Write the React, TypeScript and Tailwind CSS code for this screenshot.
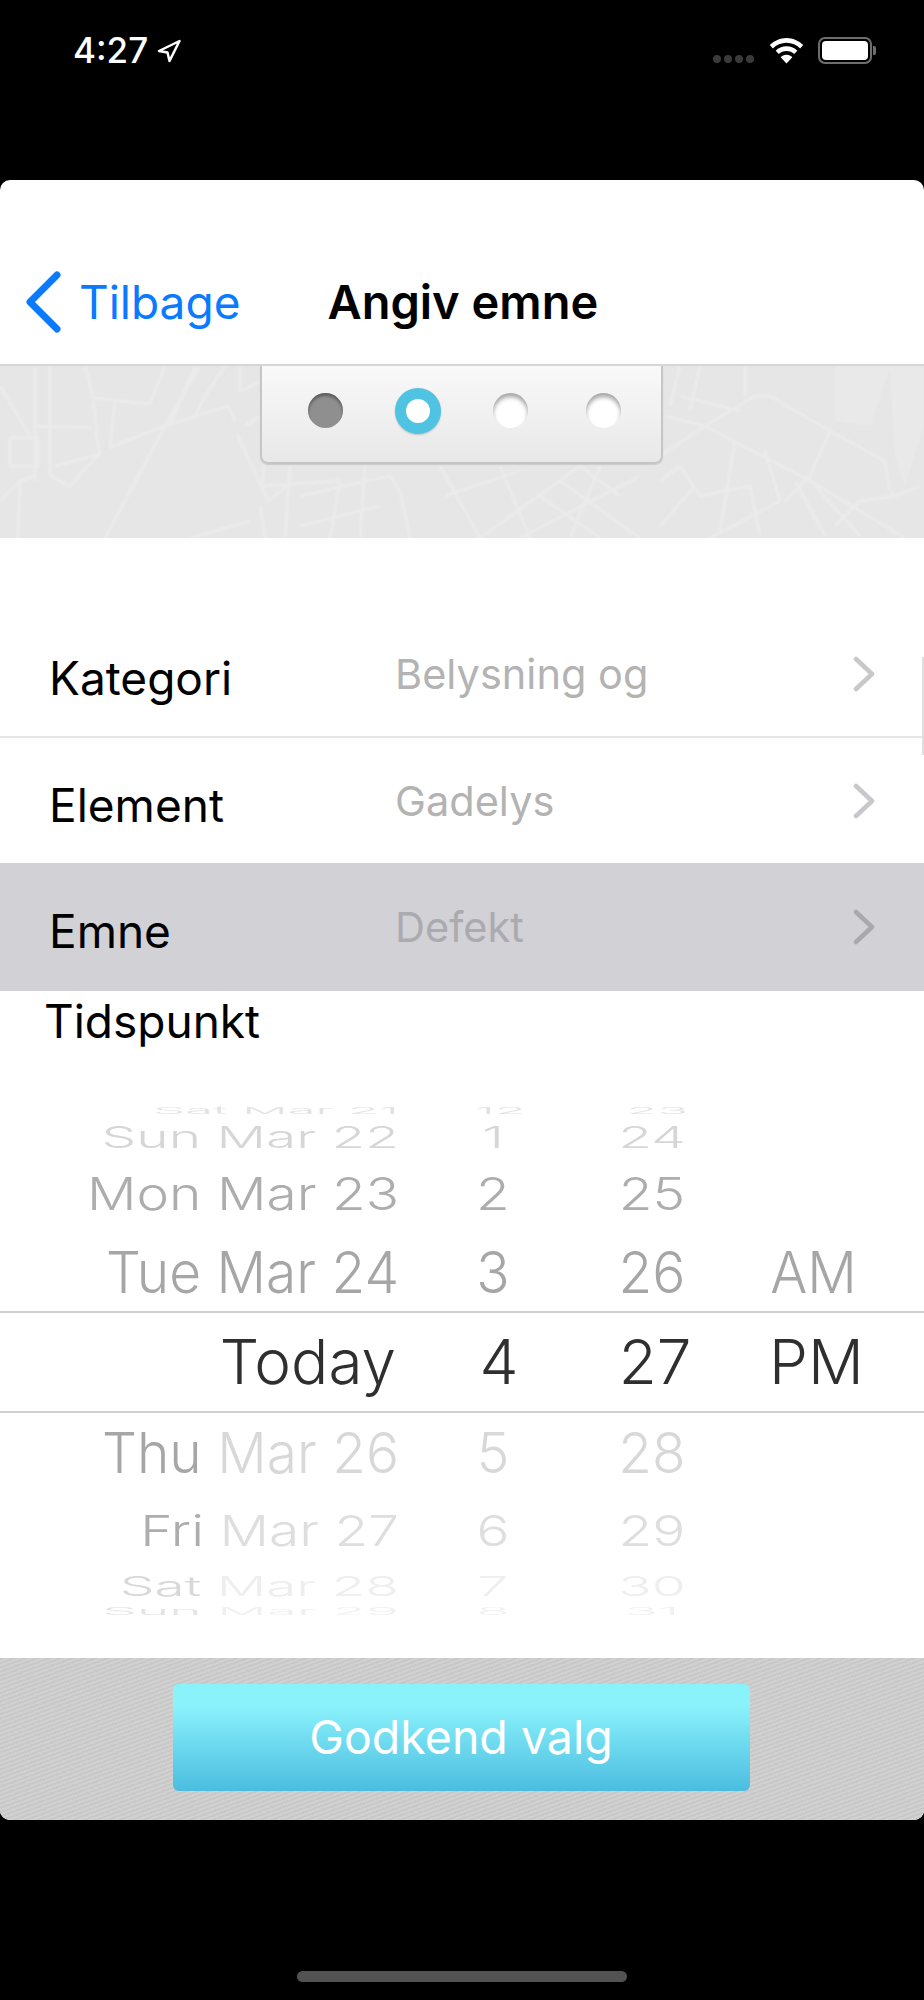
const F = "font-['Inter','Liberation_Sans',sans-serif]";

const Chevron = ({ c }: { c: string }) => (
  <svg width="24" height="36" viewBox="0 0 24 36" fill="none" className="ml-auto mr-[48px] shrink-0">
    <path d="M4 3 L20 18 L4 33" stroke={c} strokeWidth="4.5" strokeLinecap="round" strokeLinejoin="round" />
  </svg>
);

const Row = ({ label, value, sel }: { label: string; value: string; sel?: boolean }) => (
  <div className={`flex items-center ${sel ? "bg-[#d1d1d6] h-[128px]" : "h-[125px]"}`}>
    <div className="w-[395px] pl-[49px] text-[46px] leading-none text-black translate-y-[4px]">{label}</div>
    <div className={`text-[41.5px] leading-none translate-y-[1px] ${sel ? "text-[#ababaf]" : "text-[#b3b3b3]"}`}>{value}</div>
    <Chevron c={sel ? "#a9a9ad" : "#c7c7cc"} />
  </div>
);

type P = { h: string; t: string; d1: string; d2: string; a: string; m: string; ap?: string; c1: string; c2: string };
const rows: P[] = [
  { h: "h-[10px]", t: "scale-y-[0.17] scale-x-[0.92] origin-right", d1: "Sat", d2: "Mar 21", a: "12", m: "23", c1: "text-[#e2e2e2]", c2: "text-[#e2e2e2]" },
  { h: "h-[44px]", t: "scale-y-[0.55]", d1: "Sun", d2: "Mar 22", a: "1", m: "24", c1: "text-[#d6d6d6]", c2: "text-[#d6d6d6]" },
  { h: "h-[70px]", t: "scale-y-[0.82]", d1: "Mon", d2: "Mar 23", a: "2", m: "25", c1: "text-[#adadad]", c2: "text-[#adadad]" },
  { h: "h-[82px]", t: "scale-y-[1.05] translate-y-[2px]", d1: "Tue", d2: "Mar 24", a: "3", m: "26", ap: "AM", c1: "text-[#a6a6a6]", c2: "text-[#a6a6a6]" },
];
const rowsB: P[] = [
  { h: "h-[78px]", t: "scale-y-[1.03]", d1: "Thu", d2: "Mar 26", a: "5", m: "28", c1: "text-[#a6a6a6]", c2: "text-[#d8d8d8]" },
  { h: "h-[78px]", t: "scale-y-[0.78]", d1: "Fri", d2: "Mar 27", a: "6", m: "29", c1: "text-[#adadad]", c2: "text-[#dedede]" },
  { h: "h-[34px]", t: "scale-y-[0.5]", d1: "Sat", d2: "Mar 28", a: "7", m: "30", c1: "text-[#d8d8d8]", c2: "text-[#eeeeee]" },
  { h: "h-[17px]", t: "scale-y-[0.18]", d1: "Sun", d2: "Mar 29", a: "8", m: "31", c1: "text-[#e4e4e4]", c2: "text-[#f0f0f0]" },
];

const PickerRow = ({ r }: { r: P }) => (
  <div className={`grid grid-rows-1 grid-cols-[399px_188px_130px_1fr] items-center text-[55px] leading-none ${r.h}`}>
    <div className={`text-right whitespace-nowrap ${r.t}`}>
      <span className={r.c1}>{r.d1} </span>
      <span className={r.c2}>{r.d2}</span>
    </div>
    <div className={`text-center ${r.c2} ${r.t}`}>{r.a}</div>
    <div className={`text-center ${r.c2} ${r.t}`}>{r.m}</div>
    <div className={`pr-[14px] text-center text-[#a6a6a6] ${r.t}`}>{r.ap}</div>
  </div>
);

const Wifi = () => (
  <svg width="35" height="26" viewBox="0 0 36 28" fill="#fff">
    <path d="M18 0C11 0 5 3 0 7.500L3.300 11.200C7 7.600 12.300 5.200 18 5.200s11 2.400 14.700 6L36 7.500C31 3 25 0 18 0z" />
    <path d="M18 9c-4.800 0-8.800 1.800-11.600 4.800l3.300 3.500c2-2 5-3.300 8.300-3.300s6.300 1.300 8.300 3.300l3.300-3.500C26.800 10.800 22.800 9 18 9z" />
    <path d="M18 18c-2.700 0-4.800 1-6.300 2.600L18 27.500l6.300-6.900C22.800 19 20.700 18 18 18z" />
  </svg>
);

const MapLines = () => (
  <svg className="absolute inset-0 blur-[0.8px]" width="924" height="172" viewBox="0 0 924 172" fill="none" stroke="#ebebeb" strokeWidth="3" strokeLinejoin="round">
    <path d="M835 0 L890 0 L870 60 L835 55 Z M890 0 L924 0 L924 60 L905 120 L895 90 Z" fill="#e9e9e9" stroke="none" />
    <path d="M35 0 L35 115 M50 0 L50 110 M0 20 L30 70 M10 72 H38 V100 H10 Z M0 135 L20 115 L35 110 M20 115 L18 172" />
    <path d="M85 0 L93 32 L150 38 L165 0 M35 60 L92 62 M93 35 L97 65 M115 35 L110 80 M95 65 L100 88 L55 100 M100 88 L85 103 L70 120 L50 110" />
    <path d="M108 82 L165 60 L228 40 L235 55 M165 60 L105 172 M165 60 L200 0 M195 0 L170 60 M225 0 L205 30 L195 50" />
    <path d="M237 68 L268 135 L290 118 M260 140 L265 172 M190 172 L250 155 M245 60 L260 50 M240 0 L240 25 L262 15" />
    <path d="M290 100 L285 172 M300 130 L390 110 L400 125 L410 172 M265 95 L262 120 L340 115 L330 172 M300 160 L380 140 M440 100 L480 172 M365 98 L360 172" />
    <path d="M480 172 L580 100 L620 130 M520 172 L640 110 M540 130 L600 172 M560 115 L640 172 M445 130 L520 105 M600 100 L570 172 M500 100 L530 172" />
    <path d="M665 50 L705 60 L810 115 L905 172 M660 90 L705 60 L755 30 L770 30 L830 65 L885 95 L890 125 L895 130 M830 65 L810 110" />
    <path d="M735 75 L720 165 M765 85 L780 135 M785 135 L810 110 M780 135 L710 172 M680 100 L700 130 L750 120 L760 170 M660 115 L680 100" />
    <path d="M795 115 L825 170 M815 120 L860 170 M835 160 L860 135 L895 130 L920 120 M660 160 L695 120 M680 30 L740 45 M680 0 L670 40 M700 0 L690 45 M745 0 L745 30" />
  </svg>
);

export default function App() {
  return (
    <div className={`w-[924px] h-[2000px] bg-black flex flex-col overflow-hidden ${F}`}>
      {/* status bar */}
      <div className="h-[180px] shrink-0">
        <div className="flex items-center pt-[31px] pl-[73px] pr-[48px] h-[70px]">
          <span className="text-[35px] leading-none font-medium text-white">4:27</span>
          <svg width="24" height="24" viewBox="0 0 24 24" className="ml-[9px]" fill="none">
            <path d="M22.500 2 L2 12 L10.500 13.500 L12.500 22 Z" stroke="#fff" strokeWidth="2.500" strokeLinejoin="round" />
          </svg>
          <div className="ml-auto flex items-center gap-[3px] translate-y-[8px] mr-[15px]">
            {[0, 1, 2, 3].map((i) => (
              <span key={i} className="w-[8px] h-[8px] rounded-full bg-[#3a3a3a]" />
            ))}
          </div>
          <Wifi />
          <div className="ml-[14px] flex items-center">
            <div className="w-[54px] h-[27px] rounded-[7px] border-2 border-[#6e6e6e] p-[2px]">
              <div className="w-full h-full bg-white rounded-[4px]" />
            </div>
            <div className="ml-[1px] w-[3px] h-[9px] bg-[#6e6e6e] rounded-r-[2px]" />
          </div>
        </div>
      </div>

      {/* card */}
      <div className="h-[1640px] shrink-0 bg-white rounded-[10px] overflow-hidden flex flex-col">
        <div className="h-[186px] shrink-0 border-b-2 border-[#d6d6d6] flex items-end pb-[31px]">
          <svg width="36" height="62" viewBox="0 0 36 62" fill="none" className="ml-[25px] shrink-0">
            <path d="M32 4 L5 31 L32 58" stroke="#0a7aff" strokeWidth="7" strokeLinecap="round" strokeLinejoin="round" />
          </svg>
          <span className="ml-[18px] text-[46px] leading-[62px] text-[#0a7aff]">Tilbage</span>
          <span className="ml-[87px] text-[47px] leading-[62px] font-semibold text-black">Angiv emne</span>
        </div>

        {/* map */}
        <div className="h-[172px] shrink-0 bg-[#e6e6e6] relative overflow-hidden flex justify-center">
          <MapLines />
          <div className="relative -translate-x-[1px] w-[403px] h-[98px] rounded-b-[8px] border-x-2 border-b-2 border-[#c6c6c6] bg-gradient-to-b from-[#f9f9f9] to-[#e8e8e8] flex items-center pl-[46px] shadow-[0_1px_1px_rgba(0,0,0,0.12)]">
            <span className="w-[35px] h-[35px] rounded-full bg-[#8f8f8f] shadow-[inset_0_3px_3px_rgba(0,0,0,0.35)] mb-[7px]" />
            <span className="ml-[52px] w-[46px] h-[46px] rounded-full border-[11px] border-[#4fc3e2] bg-white mb-[7px] shadow-[0_1px_2px_rgba(0,0,0,0.2)]" />
            <span className="ml-[52px] w-[35px] h-[35px] rounded-full bg-white shadow-[inset_0_4px_4px_rgba(0,0,0,0.35)] mb-[7px]" />
            <span className="ml-[58px] w-[35px] h-[35px] rounded-full bg-white shadow-[inset_0_4px_4px_rgba(0,0,0,0.35)] mb-[7px]" />
          </div>
        </div>

        {/* form */}
        <div className="h-[73px] shrink-0" />
        <div className="relative">
          <div className="absolute right-0 top-[46px] w-[2px] h-[98px] bg-[#dedede]" />
          <Row label="Kategori" value="Belysning og" />
          <div className="h-[2px] bg-[#e6e6e6]" />
          <Row label="Element" value="Gadelys" />
          <Row label="Emne" value="Defekt" sel />
        </div>
        <div className="h-[64px] shrink-0 pl-[44px] text-[46px] leading-[60px] text-black">Tidspunkt</div>

        {/* picker */}
        <div className="h-[50px] shrink-0" />
        <div className="shrink-0 font-light">
          {rows.map((r) => <PickerRow key={r.a} r={r} />)}
          <div className="grid grid-cols-[399px_188px_130px_1fr] items-center h-[102px] border-y-2 border-[#cfcfcf] text-[#2f2f2f] text-[62px] leading-none">
            <div className="text-right pr-[3px]">Today</div>
            <div className="text-center pl-[12px]">4</div>
            <div className="text-center pl-[6px]">27</div>
            <div className="text-center pr-[8px]">PM</div>
          </div>
          {rowsB.map((r) => <PickerRow key={r.a} r={r} />)}
        </div>
        <div className="flex-1" />

        {/* footer */}
        <div className="h-[162px] shrink-0 bg-[#cdcdcd] bg-[repeating-linear-gradient(160deg,#c8c8c8_0px,#c8c8c8_2px,#d1d1d1_2px,#d1d1d1_4px)] flex justify-center pt-[26px]">
          <div className="w-[577px] h-[107px] -translate-x-[1px] rounded-[6px] bg-gradient-to-b from-[#8af2fb] from-[20%] to-[#4abde0] flex items-center justify-center text-[46.5px] text-white">
            Godkend valg
          </div>
        </div>
      </div>

      {/* home indicator */}
      <div className="flex-1 flex items-end justify-center pb-[18px]">
        <div className="w-[330px] h-[11px] rounded-full bg-[#525252]" />
      </div>
    </div>
  );
}
